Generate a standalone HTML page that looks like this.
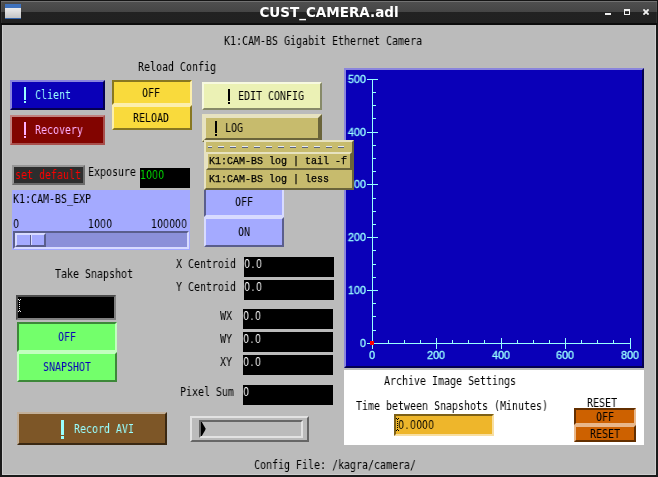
<!DOCTYPE html>
<html><head><meta charset="utf-8"><title>CUST_CAMERA.adl</title>
<style>
html,body{margin:0;padding:0}
body{width:658px;height:477px;overflow:hidden;background:#1a1a1a;position:relative}
#w{position:absolute;left:0;top:0;width:658px;height:477px;overflow:hidden;background:#1a1a1a}
#w>div,#w>span,#w>svg{position:absolute;box-sizing:content-box}
#tb{left:0;top:0;width:658px;height:25px;background:linear-gradient(#141414 0,#141414 1px,#727272 1px,#727272 2px,#4f4f4f 2px,#454545 12px,#222 12px,#212121 23px,#0c0c0c 23px,#0c0c0c 25px)}

#ttl{left:0;top:3px;width:658px;text-align:center;color:#fff;font:bold 13.5px/19px "DejaVu Sans","Liberation Sans",sans-serif}
.t,.m,.g,#ttl{will-change:transform}
.t{font:12px/14px "DejaVu Sans Mono","Liberation Mono",monospace;white-space:pre;transform:scaleX(0.8306);transform-origin:0 0}
.n{font-family:"DejaVu Sans","Liberation Sans",sans-serif;transform:scaleX(0.7859)}
.n b{font-weight:normal;margin-left:1.9px;letter-spacing:1.92px}
.m{font:10px/12px "Liberation Mono",monospace;white-space:pre;-webkit-text-stroke:.25px}
.g{font:11.2px/12px "Liberation Sans",sans-serif;color:#9ff;transform:scaleX(0.965);-webkit-text-stroke:.3px #9ff}
</style></head><body><div id="w">
<div id="tb"></div>
<div id="ttl">CUST_CAMERA.adl</div>
<div style="left:5px;top:4px;width:16px;height:15px;background:linear-gradient(#3f72bd 0,#3f72bd 4px,#ececec 4px,#c4c4c4 14px,#3566ad 14px)"></div>
<div style="left:605px;top:13px;width:6px;height:2px;background:#f0f0f0;"></div>
<div style="left:624px;top:9px;width:4px;height:3px;border:1px solid #f0f0f0;border-top-width:2px"></div>
<svg style="left:643px;top:9px" width="6" height="6" viewBox="0 0 6 6"><path d="M1.1 1.1L4.9 4.9M4.9 1.1L1.1 4.9" stroke="#f0f0f0" stroke-width="1.9" stroke-linecap="square"/></svg>
<div style="left:2px;top:25px;width:654px;height:450px;background:#cdcdcd;"></div>
<div style="left:3px;top:25px;width:652px;height:449px;background:#bbbbbb;"></div>
<div style="left:0px;top:0px;width:1px;height:25px;background:#141414;"></div>
<div style="left:657px;top:0px;width:1px;height:25px;background:#141414;"></div>
<div style="left:1px;top:2px;width:1px;height:21px;background:rgba(255,255,255,.06);"></div>
<div style="left:656px;top:2px;width:1px;height:21px;background:rgba(255,255,255,.06);"></div>
<span class="t" style="left:224px;top:34px;color:#000;">K1:CAM-BS Gigabit Ethernet Camera</span>
<span class="t" style="left:138px;top:60px;color:#000;">Reload Config</span>
<div style="left:10px;top:80px;width:91px;height:26px;background:#0a00b8;border:2px solid;border-color:#8a85dd #040051 #040051 #8a85dd"></div>
<div style="left:23.8px;top:87px;width:2.4px;height:12.7px;background:#9ff;"></div>
<div style="left:23.8px;top:101.1px;width:2.4px;height:1.9px;background:#9ff;"></div>
<span class="t" style="left:35px;top:88px;color:#9ff;">Client</span>
<div style="left:10px;top:115px;width:91px;height:26px;background:#820400;border:2px solid;border-color:#c08280 #a84f4c #a84f4c #c08280"></div>
<div style="left:23.8px;top:122px;width:2.4px;height:12.7px;background:#ffb0ff;"></div>
<div style="left:23.8px;top:136.1px;width:2.4px;height:1.9px;background:#ffb0ff;"></div>
<span class="t" style="left:35px;top:123px;color:#ffb0ff;">Recovery</span>
<div style="left:112px;top:80px;width:76px;height:21px;background:#f9da3c;border:2px solid;border-color:#887721 #fcefac #fcefac #887721"></div>
<div style="left:112px;top:105px;width:76px;height:21px;background:#f9da3c;border:2px solid;border-color:#fcefac #887721 #887721 #fcefac"></div>
<span class="t" style="left:142px;top:86px;color:#000;">OFF</span>
<span class="t" style="left:133px;top:111px;color:#000;">RELOAD</span>
<div style="left:202px;top:82px;width:116px;height:24px;background:#ebf1b5;border:2px solid;border-color:#f7f9e0 #878a68 #878a68 #f7f9e0"></div>
<div style="left:227.9px;top:89px;width:2.4px;height:12px;background:#000;"></div>
<div style="left:227.9px;top:102.1px;width:2.4px;height:1.9px;background:#000;"></div>
<span class="t" style="left:238px;top:89px;color:#000;">EDIT CONFIG</span>
<div style="left:202px;top:114px;width:116px;height:24px;background:#c7bb6d;border:2px solid;border-color:#e7e2c0 #6a643a #6a643a #e7e2c0"></div>
<div style="left:204px;top:116px;width:112px;height:20px;background:#c7bb6d;border:2px solid;border-color:#e7e2c0 #6a643a #6a643a #e7e2c0"></div>
<div style="left:214.8px;top:121px;width:2.4px;height:12px;background:#000;"></div>
<div style="left:214.8px;top:134.1px;width:2.4px;height:1.9px;background:#000;"></div>
<span class="t" style="left:225px;top:121px;color:#000;">LOG</span>
<div style="left:12px;top:165px;width:69px;height:16px;background:#2d2d2d;border:2px solid;border-color:#969696 #6c6c6c #6c6c6c #969696"></div>
<span class="t" style="left:15px;top:168px;color:#fd0000;">set default</span>
<span class="t" style="left:88px;top:165px;color:#000;">Exposure</span>
<div style="left:140px;top:168px;width:50px;height:20px;background:#000;"></div>
<span class="t n" style="left:140px;top:168px;color:#00d800;">1000</span>
<div style="left:12px;top:190px;width:178px;height:60px;background:#a4aaff;"></div>
<span class="t" style="left:13px;top:192px;color:#000;">K1:CAM-BS_EXP</span>
<span class="t n" style="left:13px;top:217px;color:#000;">0</span>
<span class="t n" style="left:88px;top:217px;color:#000;">1000</span>
<span class="t n" style="left:151px;top:217px;color:#000;">100000</span>
<div style="left:13px;top:231px;width:172px;height:14px;background:#8b90d9;border:2px solid;border-color:#5a5e8c #d8dbff #d8dbff #5a5e8c"></div>
<div style="left:15px;top:233px;width:27px;height:10px;background:#a4aaff;border:2px solid;border-color:#d8dbff #5a5e8c #5a5e8c #d8dbff"></div>
<div style="left:30px;top:235px;width:1px;height:10px;background:#5a5e8c;"></div>
<div style="left:31px;top:235px;width:1px;height:10px;background:#d8dbff;"></div>
<div style="left:204px;top:187px;width:76px;height:26px;background:#a4aaff;border:2px solid;border-color:#5a5e8c #d8dbff #d8dbff #5a5e8c"></div>
<div style="left:204px;top:217px;width:76px;height:26px;background:#a4aaff;border:2px solid;border-color:#d8dbff #5a5e8c #5a5e8c #d8dbff"></div>
<span class="t" style="left:235px;top:195px;color:#000;">OFF</span>
<span class="t" style="left:238px;top:225px;color:#000;">ON</span>
<span class="t" style="left:55px;top:267px;color:#000;">Take Snapshot</span>
<div style="left:16px;top:295px;width:96px;height:21px;background:#000;border:2px solid;border-color:#4c4c4c #808080 #808080 #4c4c4c"></div>
<div style="left:18px;top:299px;width:1px;height:1px;background:#e8e8e8;"></div>
<div style="left:20px;top:299px;width:1px;height:1px;background:#e8e8e8;"></div>
<div style="left:19px;top:300px;width:1px;height:1px;background:#e8e8e8;"></div>
<div style="left:19px;top:302px;width:1px;height:1px;background:#e8e8e8;"></div>
<div style="left:19px;top:304px;width:1px;height:1px;background:#e8e8e8;"></div>
<div style="left:19px;top:306px;width:1px;height:1px;background:#e8e8e8;"></div>
<div style="left:19px;top:308px;width:1px;height:1px;background:#e8e8e8;"></div>
<div style="left:19px;top:310px;width:1px;height:1px;background:#e8e8e8;"></div>
<div style="left:18px;top:311px;width:1px;height:1px;background:#e8e8e8;"></div>
<div style="left:20px;top:311px;width:1px;height:1px;background:#e8e8e8;"></div>
<div style="left:17px;top:322px;width:96px;height:26px;background:#73ff6b;border:2px solid;border-color:#3d8839 #c2ffbf #c2ffbf #3d8839"></div>
<div style="left:17px;top:352px;width:96px;height:26px;background:#73ff6b;border:2px solid;border-color:#c2ffbf #3d8839 #3d8839 #c2ffbf"></div>
<span class="t" style="left:58px;top:330px;color:#0a00b8;">OFF</span>
<span class="t" style="left:43px;top:360px;color:#0a00b8;">SNAPSHOT</span>
<div style="left:244px;top:257px;width:90px;height:20px;background:#000;"></div>
<span class="t" style="left:176px;top:257px;color:#000;">X Centroid</span>
<span class="t n" style="left:243.7px;top:257px;color:#fff;">0<b>.</b>0</span>
<div style="left:244px;top:280px;width:90px;height:20px;background:#000;"></div>
<span class="t" style="left:176px;top:280px;color:#000;">Y Centroid</span>
<span class="t n" style="left:243.7px;top:280px;color:#fff;">0<b>.</b>0</span>
<div style="left:243px;top:309px;width:90px;height:20px;background:#000;"></div>
<span class="t" style="left:220px;top:309px;color:#000;">WX</span>
<span class="t n" style="left:242.7px;top:309px;color:#fff;">0<b>.</b>0</span>
<div style="left:243px;top:332px;width:90px;height:20px;background:#000;"></div>
<span class="t" style="left:220px;top:332px;color:#000;">WY</span>
<span class="t n" style="left:242.7px;top:332px;color:#fff;">0<b>.</b>0</span>
<div style="left:243px;top:355px;width:90px;height:20px;background:#000;"></div>
<span class="t" style="left:220px;top:355px;color:#000;">XY</span>
<span class="t n" style="left:242.7px;top:355px;color:#fff;">0<b>.</b>0</span>
<div style="left:243px;top:385px;width:90px;height:20px;background:#000;"></div>
<span class="t" style="left:180px;top:385px;color:#000;">Pixel Sum</span>
<span class="t n" style="left:242.7px;top:385px;color:#fff;">0</span>
<div style="left:17px;top:412px;width:146px;height:29px;background:#7d5627;border:2px solid;border-color:#c2b09a #3a2812 #3a2812 #c2b09a"></div>
<div style="left:61px;top:420px;width:3.3px;height:14.6px;background:#9ff;"></div>
<div style="left:61px;top:436.3px;width:3.3px;height:2.6px;background:#9ff;"></div>
<span class="t" style="left:74px;top:422px;color:#9ff;">Record AVI</span>
<div style="left:190px;top:416px;width:115px;height:22px;background:#bbbbbb;border:2px solid;border-color:#e2e2e2 #666666 #666666 #e2e2e2"></div>
<div style="left:199px;top:420px;width:100px;height:14px;background:#bbbbbb;border:2px solid;border-color:#666666 #e2e2e2 #e2e2e2 #666666"></div>
<svg style="left:201px;top:422px" width="6" height="14" viewBox="0 0 6 14"><path d="M0 0L0.8 0L4.4 6.2L4.4 7.8L0.8 14L0 14Z" fill="#000"/></svg>
<div style="left:344px;top:68px;width:296px;height:296px;background:#0a00b8;border:2px solid;border-color:#8a85dd #040051 #040051 #8a85dd"></div>
<div style="left:372px;top:79px;width:1px;height:270px;background:#9ff;"></div>
<div style="left:372px;top:343px;width:259px;height:1px;background:#9ff;"></div>
<div style="left:367px;top:343px;width:11px;height:1px;background:#9ff;"></div>
<span class="g" style="left:326px;width:40px;text-align:right;transform-origin:100% 0;top:337px">0</span>
<div style="left:372px;top:330px;width:4px;height:1px;background:#9ff;"></div>
<div style="left:372px;top:316px;width:4px;height:1px;background:#9ff;"></div>
<div style="left:372px;top:303px;width:4px;height:1px;background:#9ff;"></div>
<div style="left:367px;top:290px;width:11px;height:1px;background:#9ff;"></div>
<span class="g" style="left:326px;width:40px;text-align:right;transform-origin:100% 0;top:284px">100</span>
<div style="left:372px;top:277px;width:4px;height:1px;background:#9ff;"></div>
<div style="left:372px;top:264px;width:4px;height:1px;background:#9ff;"></div>
<div style="left:372px;top:250px;width:4px;height:1px;background:#9ff;"></div>
<div style="left:367px;top:237px;width:11px;height:1px;background:#9ff;"></div>
<span class="g" style="left:326px;width:40px;text-align:right;transform-origin:100% 0;top:231px">200</span>
<div style="left:372px;top:224px;width:4px;height:1px;background:#9ff;"></div>
<div style="left:372px;top:211px;width:4px;height:1px;background:#9ff;"></div>
<div style="left:372px;top:198px;width:4px;height:1px;background:#9ff;"></div>
<div style="left:367px;top:184px;width:11px;height:1px;background:#9ff;"></div>
<span class="g" style="left:326px;width:40px;text-align:right;transform-origin:100% 0;top:178px">300</span>
<div style="left:372px;top:171px;width:4px;height:1px;background:#9ff;"></div>
<div style="left:372px;top:158px;width:4px;height:1px;background:#9ff;"></div>
<div style="left:372px;top:145px;width:4px;height:1px;background:#9ff;"></div>
<div style="left:367px;top:132px;width:11px;height:1px;background:#9ff;"></div>
<span class="g" style="left:326px;width:40px;text-align:right;transform-origin:100% 0;top:126px">400</span>
<div style="left:372px;top:118px;width:4px;height:1px;background:#9ff;"></div>
<div style="left:372px;top:105px;width:4px;height:1px;background:#9ff;"></div>
<div style="left:372px;top:92px;width:4px;height:1px;background:#9ff;"></div>
<div style="left:367px;top:79px;width:11px;height:1px;background:#9ff;"></div>
<span class="g" style="left:326px;width:40px;text-align:right;transform-origin:100% 0;top:73px">500</span>
<div style="left:372px;top:338px;width:1px;height:11px;background:#9ff;"></div>
<span class="g" style="left:352px;width:40px;text-align:center;top:349px">0</span>
<div style="left:388px;top:340px;width:1px;height:3px;background:#9ff;"></div>
<div style="left:404px;top:340px;width:1px;height:3px;background:#9ff;"></div>
<div style="left:420px;top:340px;width:1px;height:3px;background:#9ff;"></div>
<div style="left:436px;top:338px;width:1px;height:11px;background:#9ff;"></div>
<span class="g" style="left:416px;width:40px;text-align:center;top:349px">200</span>
<div style="left:452px;top:340px;width:1px;height:3px;background:#9ff;"></div>
<div style="left:468px;top:340px;width:1px;height:3px;background:#9ff;"></div>
<div style="left:484px;top:340px;width:1px;height:3px;background:#9ff;"></div>
<div style="left:501px;top:338px;width:1px;height:11px;background:#9ff;"></div>
<span class="g" style="left:481px;width:40px;text-align:center;top:349px">400</span>
<div style="left:517px;top:340px;width:1px;height:3px;background:#9ff;"></div>
<div style="left:533px;top:340px;width:1px;height:3px;background:#9ff;"></div>
<div style="left:549px;top:340px;width:1px;height:3px;background:#9ff;"></div>
<div style="left:565px;top:338px;width:1px;height:11px;background:#9ff;"></div>
<span class="g" style="left:545px;width:40px;text-align:center;top:349px">600</span>
<div style="left:581px;top:340px;width:1px;height:3px;background:#9ff;"></div>
<div style="left:597px;top:340px;width:1px;height:3px;background:#9ff;"></div>
<div style="left:613px;top:340px;width:1px;height:3px;background:#9ff;"></div>
<div style="left:630px;top:338px;width:1px;height:11px;background:#9ff;"></div>
<span class="g" style="left:610px;width:40px;text-align:center;top:349px">800</span>
<div style="left:370px;top:341px;width:4px;height:4px;background:#fd0000;"></div>
<div style="left:344px;top:370px;width:300.4px;height:75px;background:#fff;"></div>
<span class="t" style="left:384px;top:374px;color:#000;">Archive Image Settings</span>
<span class="t" style="left:356px;top:399px;color:#000;">Time between Snapshots (Minutes)</span>
<div style="left:394px;top:414px;width:96px;height:18px;background:#eeb62b;border:2px solid;border-color:#7d6017 #f8dfa2 #f8dfa2 #7d6017"></div>
<span class="t n" style="left:397.5px;top:418px;color:#000;">0<b>.</b>0000</span>
<div style="left:396px;top:418px;width:1px;height:1px;background:#000;"></div>
<div style="left:398px;top:418px;width:1px;height:1px;background:#000;"></div>
<div style="left:397px;top:419px;width:1px;height:1px;background:#000;"></div>
<div style="left:397px;top:421px;width:1px;height:1px;background:#000;"></div>
<div style="left:397px;top:423px;width:1px;height:1px;background:#000;"></div>
<div style="left:397px;top:425px;width:1px;height:1px;background:#000;"></div>
<div style="left:397px;top:427px;width:1px;height:1px;background:#000;"></div>
<div style="left:397px;top:429px;width:1px;height:1px;background:#000;"></div>
<div style="left:396px;top:430px;width:1px;height:1px;background:#000;"></div>
<div style="left:398px;top:430px;width:1px;height:1px;background:#000;"></div>
<span class="t" style="left:587px;top:396px;color:#000;">RESET</span>
<div style="left:574px;top:408px;width:58px;height:13px;background:#cd6100;border:2px solid;border-color:#632f00 #e8b78a #e8b78a #632f00"></div>
<div style="left:574px;top:425px;width:58px;height:13px;background:#cd6100;border:2px solid;border-color:#e8b78a #632f00 #632f00 #e8b78a"></div>
<span class="t" style="left:596px;top:410px;color:#000;">OFF</span>
<span class="t" style="left:590px;top:427px;color:#000;">RESET</span>
<span class="t" style="left:254px;top:458px;color:#000;">Config File: /kagra/camera/</span>
<div style="left:204px;top:140px;width:146px;height:46px;background:#c7bb6d;border:2px solid;border-color:#e7e2c0 #6a643a #6a643a #e7e2c0"></div>
<div style="left:208px;top:146px;width:4px;height:1px;background:#e4eaf4;"></div>
<div style="left:208px;top:147px;width:4px;height:1px;background:#5c6478;"></div>
<div style="left:218px;top:146px;width:6px;height:1px;background:#e4eaf4;"></div>
<div style="left:218px;top:147px;width:6px;height:1px;background:#5c6478;"></div>
<div style="left:230px;top:146px;width:6px;height:1px;background:#e4eaf4;"></div>
<div style="left:230px;top:147px;width:6px;height:1px;background:#5c6478;"></div>
<div style="left:242px;top:146px;width:6px;height:1px;background:#e4eaf4;"></div>
<div style="left:242px;top:147px;width:6px;height:1px;background:#5c6478;"></div>
<div style="left:254px;top:146px;width:6px;height:1px;background:#e4eaf4;"></div>
<div style="left:254px;top:147px;width:6px;height:1px;background:#5c6478;"></div>
<div style="left:266px;top:146px;width:6px;height:1px;background:#e4eaf4;"></div>
<div style="left:266px;top:147px;width:6px;height:1px;background:#5c6478;"></div>
<div style="left:278px;top:146px;width:6px;height:1px;background:#e4eaf4;"></div>
<div style="left:278px;top:147px;width:6px;height:1px;background:#5c6478;"></div>
<div style="left:290px;top:146px;width:6px;height:1px;background:#e4eaf4;"></div>
<div style="left:290px;top:147px;width:6px;height:1px;background:#5c6478;"></div>
<div style="left:302px;top:146px;width:6px;height:1px;background:#e4eaf4;"></div>
<div style="left:302px;top:147px;width:6px;height:1px;background:#5c6478;"></div>
<div style="left:314px;top:146px;width:6px;height:1px;background:#e4eaf4;"></div>
<div style="left:314px;top:147px;width:6px;height:1px;background:#5c6478;"></div>
<div style="left:326px;top:146px;width:6px;height:1px;background:#e4eaf4;"></div>
<div style="left:326px;top:147px;width:6px;height:1px;background:#5c6478;"></div>
<div style="left:338px;top:146px;width:6px;height:1px;background:#e4eaf4;"></div>
<div style="left:338px;top:147px;width:6px;height:1px;background:#5c6478;"></div>
<div style="left:206px;top:152px;width:142px;height:14px;background:#c7bb6d;border:2px solid;border-color:#e7e2c0 #6a643a #6a643a #e7e2c0"></div>
<span class="m" style="left:209px;top:156px;color:#000;">K1:CAM-BS log | tail -f</span>
<span class="m" style="left:209px;top:174px;color:#000;">K1:CAM-BS log | less</span>
</div></body></html>
